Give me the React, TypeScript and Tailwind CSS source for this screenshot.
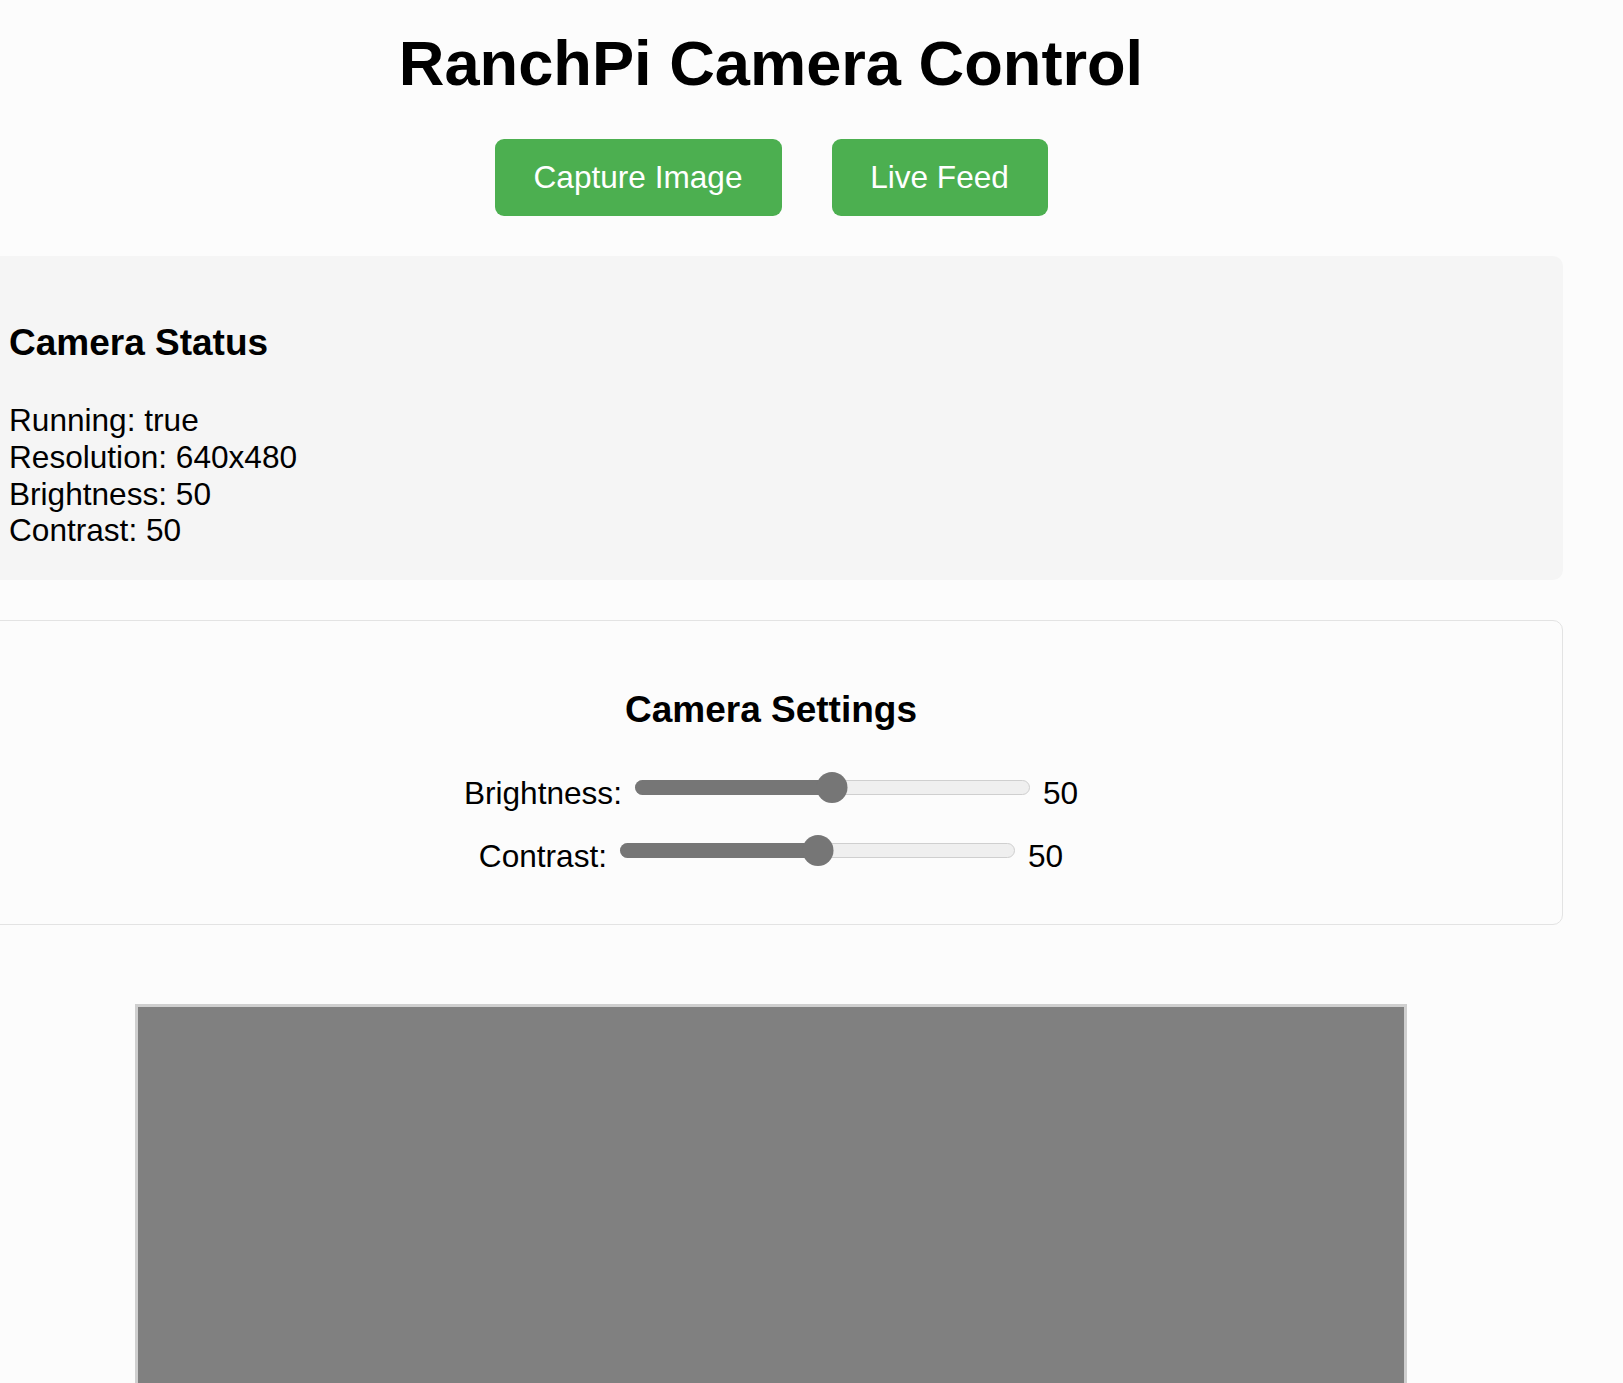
import React from "react";

const status = [
  { label: "Running", value: "true" },
  { label: "Resolution", value: "640x480" },
  { label: "Brightness", value: "50" },
  { label: "Contrast", value: "50" },
];

function Slider({ value }: { value: number }) {
  return (
    <div className="relative mt-[5px] h-[15px] w-[395px]">
      <div className="absolute inset-0 rounded-full border border-[#cfcfcf] bg-[#efefef]" />
      <div
        className="absolute left-0 top-0 h-[15px] rounded-l-full bg-[#767676]"
        style={{ width: `${value}%` }}
      />
      <div
        className="absolute top-[-8px] h-[31px] w-[31px] -translate-x-1/2 rounded-full bg-[#767676]"
        style={{ left: `${value}%` }}
      />
    </div>
  );
}

function SettingRow({ label, value }: { label: string; value: number }) {
  return (
    <div className="flex h-[37px] items-start justify-center gap-[13px] leading-[37px]">
      <span>{label}:</span>
      <Slider value={value} />
      <span>{value}</span>
    </div>
  );
}

export default function App() {
  return (
    <div className="h-[1383px] overflow-hidden bg-[#fcfcfc] font-['Liberation_Sans',Arial,sans-serif] text-[31.6px] text-black">
      <div className="ml-[-21px] w-[1584px]">
        <h1 className="pt-[26px] text-center text-[63.2px] font-bold leading-[74px]">RanchPi Camera Control</h1>

        <div className="mt-[39px] flex justify-center gap-[50px]">
          <button className="h-[77px] w-[287px] rounded-[9px] bg-[#4caf50] text-white">Capture Image</button>
          <button className="h-[77px] w-[216px] rounded-[9px] bg-[#4caf50] text-white">Live Feed</button>
        </div>

        <section className="mt-[40px] rounded-[10px] bg-[#f5f5f5] px-[30px] pb-[31px] pt-[30px]">
          <h3 className="mb-[38px] mt-[35px] text-[37px] font-bold leading-[43px]">Camera Status</h3>
          {status.map(s => (
            <p key={s.label} className="leading-[36.8px]">
              {s.label}: {s.value}
            </p>
          ))}
        </section>

        <section className="mt-[40px] rounded-[10px] border border-[#e3e3e3] px-[30px] pb-[49px] pt-[30px]">
          <h3 className="mb-[44px] mt-[37px] text-center text-[37px] font-bold leading-[43px]">Camera Settings</h3>
          <div className="flex flex-col gap-[26px]">
            <SettingRow label="Brightness" value={50} />
            <SettingRow label="Contrast" value={50} />
          </div>
        </section>

        <div className="mx-auto mt-[79px] h-[960px] w-[1272px] border-[3px] border-[#cfcfcf] bg-[#808080]" />
      </div>
    </div>
  );
}
